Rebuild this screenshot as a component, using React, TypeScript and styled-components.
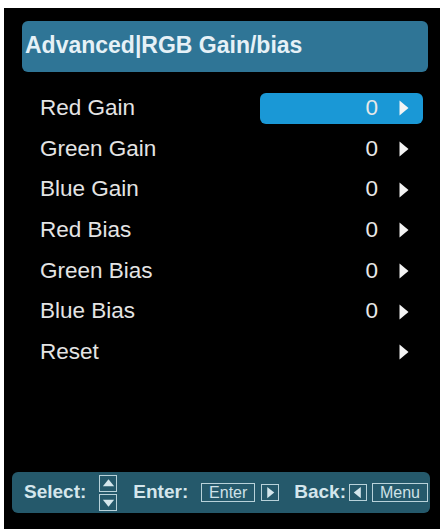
import styled, { createGlobalStyle } from "styled-components"
import { FC } from "react"

interface RowItem {
  label: string
  value?: string
  selected?: boolean
}

const rows: RowItem[] = [
  { label: "Red Gain", value: "0", selected: true },
  { label: "Green Gain", value: "0" },
  { label: "Blue Gain", value: "0" },
  { label: "Red Bias", value: "0" },
  { label: "Green Bias", value: "0" },
  { label: "Blue Bias", value: "0" },
  { label: "Reset" },
]

const RightArrow = () => (
  <ArrowSvg width="10" height="16" viewBox="0 0 10 16">
    <path d="M0.5 0.5 L9.5 8 L0.5 15.5 Z" fill="#f4f4f4" />
  </ArrowSvg>
)

const TriBox: FC<{ dir: "up" | "down" | "left" | "right" }> = ({ dir }) => {
  const d = {
    up: "M2 11 L8 3.5 L14 11 Z",
    down: "M2 5 L8 12.5 L14 5 Z",
    left: "M11.5 2 L4 8 L11.5 14 Z",
    right: "M4.5 2 L12 8 L4.5 14 Z",
  }[dir]
  return (
    <IconBox>
      <svg width="15" height="15" viewBox="0 0 16 16">
        <path d={d} fill="#d4e6ec" />
      </svg>
    </IconBox>
  )
}

const Row: FC<{ item: RowItem }> = ({ item }) => (
  <RowLine>
    <RowLabel>{item.label}</RowLabel>
    <ValueCell $selected={!!item.selected}>
      {item.value && <Value>{item.value}</Value>}
      <RightArrow />
    </ValueCell>
  </RowLine>
)

const App = () => {
  return <>
    <GlobalStyle />
    <Panel>
      <Header>Advanced|RGB Gain/bias</Header>
      <List>
        {rows.map(item => <Row key={item.label} item={item} />)}
      </List>
      <Footer>
        <Hint>Select:</Hint>
        <UpDown>
          <TriBox dir="up" />
          <TriBox dir="down" />
        </UpDown>
        <Hint $ml={16}>Enter:</Hint>
        <KeyBox $ml={13} $w={54}>Enter</KeyBox>
        <Spacer $w={6} />
        <TriBox dir="right" />
        <Hint $ml={15}>Back:</Hint>
        <Spacer $w={3} />
        <TriBox dir="left" />
        <KeyBox $ml={5} $w={56}>Menu</KeyBox>
      </Footer>
    </Panel>
  </>
}

export default App

const GlobalStyle = createGlobalStyle`
  html, body {
    margin: 0;
    background: #ffffff;
  }
  body {
    font-family: "Liberation Sans", Arial, sans-serif;
  }
`

const Panel = styled.div`
  margin: 8px 3px 0 4px;
  width: 436px;
  height: 521px;
  background: #000;
  display: flex;
  flex-direction: column;
  box-sizing: border-box;
  padding-top: 13px;
`

const Header = styled.div`
  margin: 0 12px 0 18px;
  height: 51px;
  border-radius: 6px;
  background: #2f7596;
  color: #e6f1f7;
  font-size: 23px;
  font-weight: bold;
  display: flex;
  align-items: center;
  padding-left: 3px;
  padding-bottom: 2px;
  box-sizing: border-box;
`

const List = styled.div`
  margin-top: 16px;
  flex: 1;
`

const RowLine = styled.div`
  height: 40.7px;
  display: flex;
  align-items: center;
  padding-left: 36px;
  padding-right: 17px;
`

const RowLabel = styled.span`
  flex: 1;
  color: #e4e4e4;
  font-size: 22.5px;
  padding-bottom: 1px;
`

const ValueCell = styled.div<{ $selected: boolean }>`
  width: 163px;
  height: 31px;
  border-radius: 6px;
  background: ${p => p.$selected ? "#1a98d6" : "transparent"};
  display: flex;
  align-items: center;
  justify-content: flex-end;
  padding-right: 14px;
  box-sizing: border-box;
  gap: 21px;
`

const ArrowSvg = styled.svg`
  flex-shrink: 0;
  display: block;
`

const Value = styled.span`
  color: #e8e8e8;
  font-size: 22.5px;
  padding-bottom: 1px;
`

const Footer = styled.div`
  margin: 0 10px 16px 8px;
  height: 41px;
  border-radius: 6px;
  background: #25596b;
  display: flex;
  align-items: center;
  padding-left: 12px;
`

const Hint = styled.span<{ $ml?: number }>`
  margin-left: ${p => p.$ml ?? 0}px;
  color: #d4e6ec;
  font-size: 19px;
  font-weight: bold;
  padding-bottom: 1px;
`

const UpDown = styled.div`
  margin-left: 13px;
  display: flex;
  flex-direction: column;
  gap: 2px;
`

const IconBox = styled.span`
  display: inline-flex;
  flex-shrink: 0;
  width: 18px;
  height: 17px;
  border: 1px solid #b8d2da;
  box-sizing: border-box;
  align-items: center;
  justify-content: center;
  svg { display: block; }
`

const KeyBox = styled.span<{ $ml: number; $w: number }>`
  margin-left: ${p => p.$ml}px;
  width: ${p => p.$w}px;
  height: 19px;
  border: 1px solid #b8d2da;
  box-sizing: border-box;
  display: inline-flex;
  align-items: center;
  justify-content: center;
  color: #cfe2e8;
  font-size: 16px;
`

const Spacer = styled.span<{ $w: number }>`
  width: ${p => p.$w}px;
`
